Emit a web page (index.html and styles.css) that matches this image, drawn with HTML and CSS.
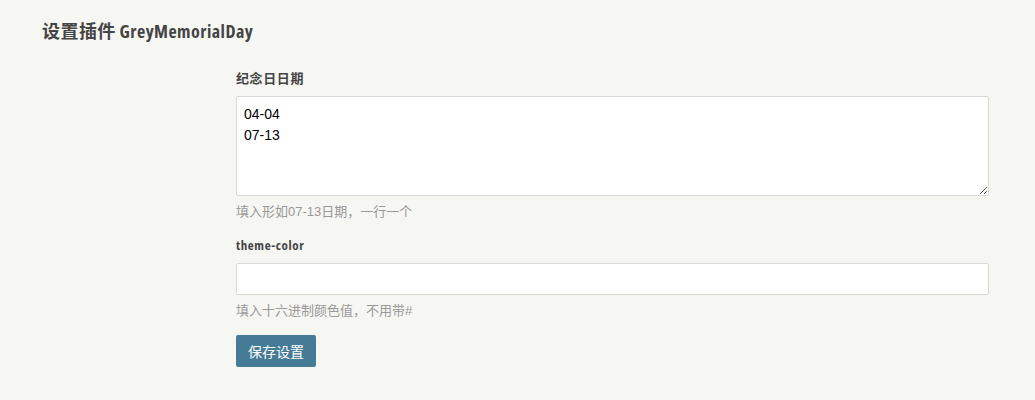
FILE: index.html
```html
<!DOCTYPE html>
<html>
<head>
    <meta charset="utf-8" />
    <title>设置插件 GreyMemorialDay</title>
    <link rel="stylesheet" href="styles.css">
</head>
<body>
    <div class="page-title">
        <h2>设置插件 GreyMemorialDay</h2>
    </div>

    <div class="config">
        <form>
            <ul class="option">
                <li>
                    <label class="label" for="days">纪念日日期</label>
                    <textarea id="days" class="textarea">04-04
07-13</textarea>
                    <p class="desc">填入形如07-13日期，一行一个</p>
                </li>
            </ul>
            <ul class="option">
                <li>
                    <label class="label" for="color">theme-color</label>
                    <input id="color" class="text" type="text" />
                    <p class="desc">填入十六进制颜色值，不用带#</p>
                </li>
            </ul>
            <ul class="option submit">
                <li>
                    <button type="submit" class="btn">保存设置</button>
                </li>
            </ul>
        </form>
    </div>
</body>
</html>
```

FILE: styles.css
```css
html, body {
    margin: 0;
    padding: 0;
}
body {
    background-color: #f6f6f3;
    color: #444;
    font-family: "Liberation Sans", Arial, "Noto Sans CJK SC", sans-serif;
    font-size: 14px;
}

.page-title {
    padding: 0 42px;
}
.page-title h2 {
    margin: 19px 0 0;
    font-size: 18px;
    line-height: 24px;
    font-weight: bold;
    font-family: "Open Sans", "Noto Sans CJK SC", sans-serif;
    font-stretch: 75%;
    letter-spacing: 0.45px;
}

.config {
    margin: 0 46px 0 236px;
    padding-top: 25px;
}

.option {
    list-style: none;
    margin: 0;
    padding: 0;
}
.option li {
    margin: 0 0 13px;
}

.label {
    display: block;
    margin-bottom: 8px;
    font-size: 13px;
    line-height: 20px;
    font-weight: bold;
    font-family: "Open Sans", "Noto Sans CJK SC", sans-serif;
    font-stretch: 75%;
    letter-spacing: 0.6px;
}

.textarea, .text {
    display: block;
    box-sizing: border-box;
    width: 100%;
    margin: 0;
    border: 1px solid #d9d9d6;
    background: #fff;
    border-radius: 2px;
    font-family: "Liberation Sans", Arial, sans-serif;
    font-size: 14px;
    color: #000;
    outline: none;
}
.textarea {
    height: 100px;
    padding: 7px 7px;
    line-height: 21px;
    resize: vertical;
}
.text {
    height: 32px;
    padding: 0 7px;
}

.desc {
    margin: 6px 0 0;
    font-size: 13px;
    line-height: 20px;
    color: #999;
}

.submit li {
    margin-top: 14px;
}
.btn {
    width: 80px;
    height: 32px;
    padding: 0;
    border: none;
    border-radius: 2px;
    background-color: #467b96;
    color: #fff;
    font-size: 14px;
    font-family: "Liberation Sans", "Noto Sans CJK SC", sans-serif;
    cursor: pointer;
}
```
